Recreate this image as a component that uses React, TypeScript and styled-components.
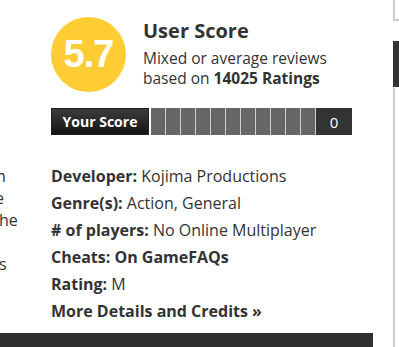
import React from "react";
import styled, { createGlobalStyle } from "styled-components";

const Global = createGlobalStyle`
  html, body { margin: 0; padding: 0; background: #fff; }
  body { width: 399px; height: 347px; overflow: hidden; font-family: "Open Sans", "Liberation Sans", sans-serif; color: #333; }
`;

const Page = styled.div`
  display: flex;
  width: 399px;
  height: 347px;
  overflow: hidden;
`;

const MainArea = styled.div`
  width: 373px;
  display: flex;
  flex-direction: column;
  flex-shrink: 0;
`;

const Content = styled.div`
  flex: 1;
  display: flex;
`;

const LeftClip = styled.div`
  width: 51px;
  flex-shrink: 0;
  overflow: hidden;
  padding-top: 165px;
  font-size: 16px;
  line-height: 22px;
  color: #333;
`;

const FragLine = styled.div<{ $shift: number }>`
  height: 22px;
  white-space: nowrap;
  margin-left: ${(p) => p.$shift}px;
`;

const MainCol = styled.div`
  flex: 1;
  display: flex;
  flex-direction: column;
  padding-top: 17px;
`;

const ScoreHeader = styled.div`
  display: flex;
  align-items: flex-start;
  gap: 17px;
`;

const Circle = styled.div`
  width: 75px;
  height: 75px;
  border-radius: 50%;
  background: #ffcc33;
  color: #fff;
  display: flex;
  align-items: center;
  justify-content: center;
  font-family: "Liberation Sans", Arial, sans-serif;
  font-weight: 700;
  font-size: 38px;
  letter-spacing: -1px;
  flex-shrink: 0;
`;

const ScoreText = styled.div`
  display: flex;
  flex-direction: column;
  margin-top: 2px;
`;

const Title = styled.div`
  font-size: 20px;
  line-height: 24px;
  font-weight: 700;
  color: #333;
`;

const Desc = styled.div`
  margin-top: 5px;
  font-size: 15.5px;
  line-height: 20px;
  color: #333;
  b { font-weight: 700; }
`;

const Bar = styled.div`
  display: flex;
  height: 27px;
  margin-top: 16px;
`;

const YourScore = styled.div`
  width: 98px;
  box-sizing: border-box;
  border: 1px solid #222;
  background: linear-gradient(#3c3c3c, #141414);
  color: #fff;
  font-weight: 700;
  font-size: 14px;
  display: flex;
  align-items: center;
  justify-content: center;
  margin-right: 2px;
`;

const Segments = styled.div`
  display: flex;
  gap: 1px;
  background: #cfcfcf;
  border-right: 1px solid #cfcfcf;
`;

const Segment = styled.div`
  width: 14px;
  background: #666;
`;

const ZeroBox = styled.div`
  width: 36px;
  background: #333;
  color: #fff;
  font-size: 15px;
  display: flex;
  align-items: center;
  justify-content: center;
`;

const Details = styled.ul`
  list-style: none;
  margin: 28px 0 0;
  padding: 0;
  font-size: 16px;
  line-height: 27px;
  color: #333;
  white-space: nowrap;
`;

const Label = styled.span`
  font-weight: 700;
`;

const Footer = styled.div`
  height: 14px;
  background: #2f2f2f;
`;

const RightRail = styled.div`
  width: 6px;
  margin-left: 20px;
  display: flex;
  flex-direction: column;
`;

const RailCap = styled.div`
  height: 19px;
  border-left: 2px solid #cccccc;
  border-bottom: 2px solid #cccccc;
`;

const RailDark = styled.div`
  height: 46px;
  margin-top: 20px;
  background: #333;
`;

const RailLine = styled.div`
  flex: 1;
  margin-top: 1px;
  border-left: 2px solid #cccccc;
`;

export default function App() {
  return (
    <>
      <Global />
      <Page>
        <MainArea>
          <Content>
            <LeftClip>
              <FragLine $shift={-4}>n</FragLine>
              <FragLine $shift={-5}>e</FragLine>
              <FragLine $shift={-1}>he</FragLine>
              <FragLine $shift={0}></FragLine>
              <FragLine $shift={-1}>s</FragLine>
            </LeftClip>
            <MainCol>
              <ScoreHeader>
                <Circle>5.7</Circle>
                <ScoreText>
                  <Title>User Score</Title>
                  <Desc>
                    Mixed or average reviews
                    <br />
                    based on <b>14025 Ratings</b>
                  </Desc>
                </ScoreText>
              </ScoreHeader>
              <Bar>
                <YourScore>Your Score</YourScore>
                <Segments>
                  {Array.from({ length: 11 }).map((_, i) => (
                    <Segment key={i} />
                  ))}
                </Segments>
                <ZeroBox>0</ZeroBox>
              </Bar>
              <Details>
                <li>
                  <Label>Developer:</Label> Kojima Productions
                </li>
                <li>
                  <Label>Genre(s):</Label> Action, General
                </li>
                <li>
                  <Label># of players:</Label> No Online Multiplayer
                </li>
                <li>
                  <Label>Cheats: On GameFAQs</Label>
                </li>
                <li>
                  <Label>Rating:</Label> M
                </li>
                <li>
                  <Label>More Details and Credits »</Label>
                </li>
              </Details>
            </MainCol>
          </Content>
          <Footer />
        </MainArea>
        <RightRail>
          <RailCap />
          <RailDark />
          <RailLine />
        </RightRail>
      </Page>
    </>
  );
}
